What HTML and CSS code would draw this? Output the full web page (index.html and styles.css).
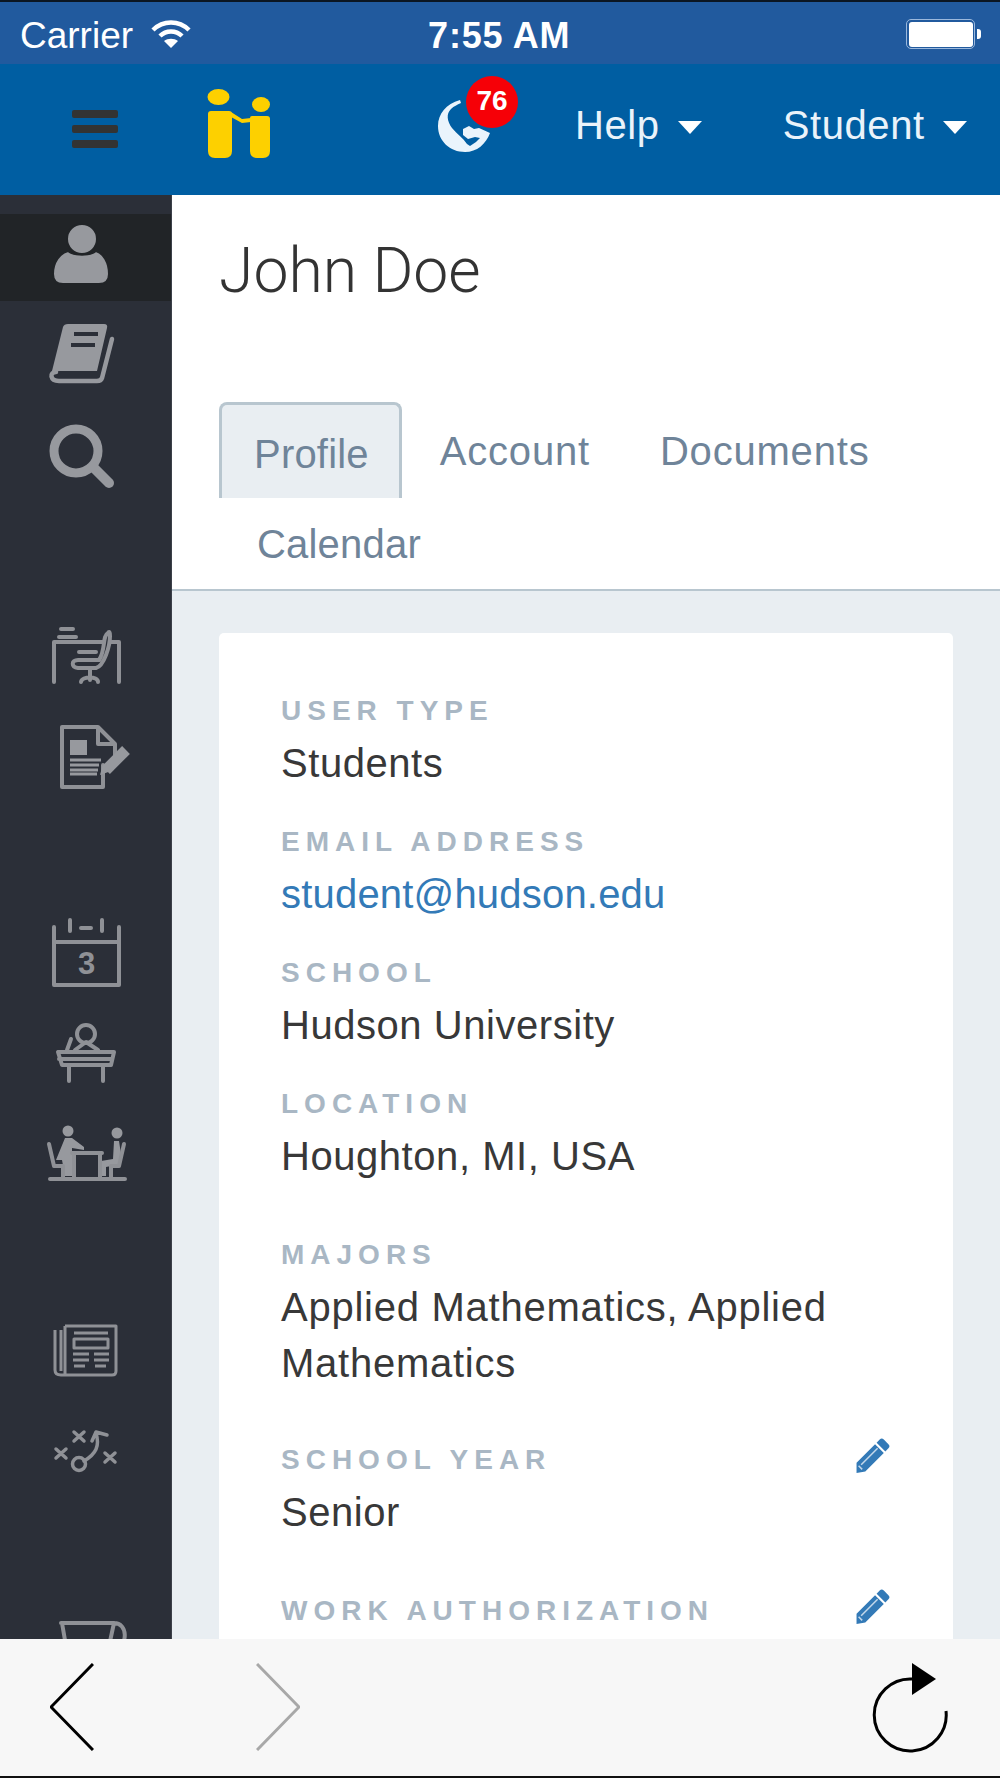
FILE: index.html
```html
<!DOCTYPE html>
<html lang="en">
<head>
<meta charset="utf-8">
<title>John Doe</title>
<link rel="stylesheet" href="styles.css">
</head>
<body>
<div class="phone">
  <div class="status">
    <span class="carrier">Carrier</span>
    <svg class="wifi" viewBox="0 0 40 30" width="40" height="30"><path class="wifi-arc" d="M2 11C12 1 28 1 38 11M9 17C15 11 25 11 31 17"/><path class="wifi-dot" d="M20 29L13 22C17 19 23 19 27 22Z"/></svg>
    <span class="time">7:55 AM</span>
    <span class="battery"><span class="battery-fill"></span></span><span class="battery-nub"></span>
  </div>
  <nav class="nav">
    <span class="burger"><i></i><i></i><i></i></span>
    <svg class="logo" viewBox="0 0 64 70" width="64" height="70"><ellipse cx="11.500" cy="8" rx="11" ry="8"/><ellipse cx="54" cy="15.500" rx="9" ry="7.500"/><path d="M4 22H22Q25 22 25 25V62Q25 69 18 69H8Q1 69 1 62V25Q1 22 4 22Z"/><path d="M45 27H60Q63 27 63 30V62Q63 69 56 69H50Q43 69 43 62V29Q43 27 45 27Z"/><path d="M24 23L35 30L44 29V33L35 34L24 28Z"/></svg>
    <span class="globe-wrap">
      <svg class="globe" viewBox="0 0 54 54" width="54" height="54"><path class="globe-land" d="M23 0C9 4 1 14 1 26C1 41 13 52 28 52C40 52 49 44 53 33L42 28L37 29L32 26L26 29L26 35L31 39L38 37L43 38L39 42L33 46L30 44C26 38 20 34 15 28C10 21 9 14 14 9C17 6 20 5 24 3Z"/></svg>
      <span class="badge">76</span>
    </span>
    <span class="nav-link nav-help">Help<i class="caret"></i></span>
    <span class="nav-link nav-student">Student<i class="caret"></i></span>
  </nav>
  <div class="main">
    <aside class="sidebar">
      <div class="side-group side-group-1">
        <a class="side-item side-active"><svg class="ico" viewBox="0 0 100 80"><path class="fill" d="M17 60C17 48 24 39 32 37C38 42 54 42 60 37C67 39 73 48 73 60Q73 70 63 70H27Q17 70 17 60Z"/><circle class="fill" cx="46" cy="25" r="15"/></svg></a>
        <a class="side-item"><svg class="ico" viewBox="0 0 100 80"><path class="fill" d="M27 15Q28 12 32 12H68Q72 12 71 16L61 59H24Q18 59 15 63Z"/><path class="book-cover" d="M76 27L66 66Q65 69 61 69H23C14 69 13 60 20 60"/><path class="dark" d="M38 22H62M35 33H59"/></svg></a>
        <a class="side-item item-search"><svg class="ico" viewBox="0 0 100 80"><circle class="thick" cx="40" cy="38" r="22"/><path class="handle" d="M57 54L73 70"/></svg></a>
      </div>
      <div class="side-group side-group-2">
        <a class="side-item"><svg class="ico" viewBox="0 0 100 80"><path class="line" d="M18 66V26H83V66M25 13H37M23 21H40"/><path class="halo" d="M72 17C66 20 70 34 63 44H42C35 44 35 51 42 52H60C68 50 74 30 74 20Q74 14 72 17Z"/><path class="line" d="M43 36H60M54 52V64M45 66C46 60 62 60 62 66"/></svg></a>
        <a class="side-item"><svg class="ico" viewBox="0 0 100 80"><path class="line" d="M67 48V70H26V10H62L79 27V40M62 10V27H79"/><rect class="fill" x="34" y="23" width="17" height="15"/><path class="thin" d="M34 43H65M34 48H63M34 53H62M34 57H61"/><path class="pen" d="M70 53L90 33"/><path class="fill" d="M64 58L67 47L75 54Z"/></svg></a>
      </div>
      <div class="side-group side-group-3">
        <a class="side-item"><svg class="ico" viewBox="0 0 100 80"><path class="line" d="M18 15V73H83V15M18 30H83M34 8V19M66 8V19M45 16H55"/><text class="cal-num" x="50.500" y="62">3</text></svg></a>
        <a class="side-item"><svg class="ico" viewBox="0 0 100 80"><circle class="line" cx="50" cy="21" r="9"/><path class="line" d="M39 37L50 29L62 37"/><path class="line" d="M22 39H78L75 52H26ZM23 46H76M33 52V68M67 52V68M31 37L35 26"/></svg></a>
        <a class="side-item"><svg class="ico" viewBox="0 0 100 80"><circle class="fill" cx="32" cy="17" r="5.500"/><circle class="fill" cx="81" cy="19" r="5.500"/><path class="fill" d="M29 24L36 24L48 33V36L36 34V48L36 62H29L26 46H20ZM78 27H83L85 40V50L70 53V62H65V47L77 45Z"/><path class="line" d="M14 65H89M38 41V64M64 41V64M36 39H66M13 30L18 52H27V64M88 30L83 52H75V64"/></svg></a>
      </div>
      <div class="side-group side-group-4">
        <a class="side-item"><svg class="ico" viewBox="0 0 100 80"><path class="line-sm" d="M29 15V64H25C21 64 19 62 19 59V19M25 19V60M29 15H80V60C80 63 78 64 76 64H25"/><rect class="line-sm" x="38" y="28" width="34" height="9"/><path class="line-sm" d="M38 22H72M37 43H53M58 43H73M37 49H53M58 49H73M38 55H49M59 55H70"/></svg></a>
        <a class="side-item"><svg class="ico" viewBox="0 0 100 80"><circle class="line-play" cx="43" cy="52" r="6.500"/><path class="line-play" d="M20 37L30 46M30 37L20 46M38 20L48 29M48 20L38 29M69 41L79 50M79 41L69 50M48 49C60 42 64 34 60 21M56 29L60 20L71 23"/></svg></a>
      </div>
      <div class="side-group">
        <a class="side-item"><svg class="ico" viewBox="0 0 100 80"><path class="line" d="M25 12H78C92 12 92 34 80 38M26 12L34 58H68L78 12"/></svg></a>
      </div>
    </aside>
    <section class="content">
      <header class="head">
        <h1 class="title">John Doe</h1>
        <ul class="tabs">
          <li class="tab tab-active">Profile</li>
          <li class="tab">Account</li>
          <li class="tab">Documents</li>
          <li class="tab tab-second-row">Calendar</li>
        </ul>
      </header>
      <div class="body">
        <div class="card">
          <div class="field"><div class="label-row"><span class="label">USER TYPE</span></div><div class="value">Students</div></div>
          <div class="field"><div class="label-row"><span class="label">EMAIL ADDRESS</span></div><div class="value value-link">student@hudson.edu</div></div>
          <div class="field"><div class="label-row"><span class="label">SCHOOL</span></div><div class="value">Hudson University</div></div>
          <div class="field field-gap"><div class="label-row"><span class="label">LOCATION</span></div><div class="value">Houghton, MI, USA</div></div>
          <div class="field field-majors"><div class="label-row"><span class="label">MAJORS</span></div><div class="value value-wide">Applied Mathematics, Applied Mathematics</div></div>
          <div class="field field-gap"><div class="label-row"><span class="label">SCHOOL YEAR</span><svg class="pencil" viewBox="0 0 35 35" width="36" height="36"><path d="M24 2.500Q26 0.500 28 2.500L32.500 7Q34.500 9 32.500 11L29.500 14L21 5.500ZM19.500 7L28 15.500L10 33.500L1.500 35V25Z"/><path class="pencil-cut" d="M6 27L22 11M3.500 28L7 31.500"/></svg></div><div class="value">Senior</div></div>
          <div class="field"><div class="label-row"><span class="label">WORK AUTHORIZATION</span><svg class="pencil" viewBox="0 0 35 35" width="36" height="36"><path d="M24 2.500Q26 0.500 28 2.500L32.500 7Q34.500 9 32.500 11L29.500 14L21 5.500ZM19.500 7L28 15.500L10 33.500L1.500 35V25Z"/><path class="pencil-cut" d="M6 27L22 11M3.500 28L7 31.500"/></svg></div></div>
        </div>
      </div>
    </section>
  </div>
  <footer class="toolbar">
    <svg class="chev chev-back" viewBox="0 0 44 88" width="44" height="88"><path d="M43 1L1 44L43 87"/></svg>
    <svg class="chev chev-fwd" viewBox="0 0 44 88" width="44" height="88"><path d="M1 1L43 44L1 87"/></svg>
    <svg class="reload" viewBox="0 0 76 90" width="76" height="90"><path class="reload-arc" d="M74 48A36 36 0 1 1 40 16"/><path class="reload-head" d="M40 0L64 16L40 32Z"/></svg>
  </footer>
</div>
</body>
</html>
```

FILE: styles.css
```css
* { box-sizing: border-box; }
html, body { margin: 0; padding: 0; }
body { font-family: "Liberation Sans", Arial, sans-serif; background: #000; }
.phone { width: 1000px; height: 1778px; display: flex; flex-direction: column; overflow: hidden; border-top: 2px solid #0b1622; border-bottom: 2px solid #111; }

.status { height: 62px; flex: none; background: #215a9e; color: #fff; display: flex; align-items: center; padding: 6px 0 0 20px; }
.carrier { font-size: 37px; }
.wifi { margin-left: 18px; margin-top: -4px; }
.wifi-arc { fill: none; stroke: #fff; stroke-width: 4.500px; }
.wifi-dot { fill: #fff; }
.time { font-size: 36px; font-weight: 700; letter-spacing: .8px; margin-left: 237px; }
.battery { margin-left: 336px; width: 69px; height: 30px; border: 1.500px solid #9bb8dc; border-radius: 5px; padding: 1.500px; display: block; margin-top: -4px; }
.battery-fill { display: block; height: 100%; background: #fff; border-radius: 3px; }
.battery-nub { width: 4px; height: 10px; background: #fff; border-radius: 0 3px 3px 0; margin-left: 2px; margin-top: -4px; }

.nav { height: 131px; flex: none; background: #005ea2; display: flex; align-items: center; color: #eaf3fa; }
.burger { display: flex; flex-direction: column; gap: 7px; width: 46px; margin-left: 72px; margin-top: -2px; }
.burger i { display: block; height: 8px; background: #333; border-radius: 2px; }
.logo { fill: #fdd000; margin-left: 89px; margin-top: -11px; filter: blur(.6px); }
.globe-wrap { position: relative; display: block; margin-left: 166px; width: 54px; height: 54px; margin-top: -5px; }
.globe { display: block; }
.globe-land { fill: #eaf4fc; }
.badge { position: absolute; left: 29px; top: -24px; width: 52px; height: 52px; border-radius: 50%; background: #f60007; color: #fff; font-weight: 700; font-size: 28px; line-height: 50px; text-align: center; }
.nav-link { font-size: 40px; letter-spacing: .6px; display: flex; align-items: center; margin-top: -9px; }
.nav-help { margin-left: 84px; }
.nav-student { margin-left: 81px; }
.caret { display: block; width: 0; height: 0; border-left: 12px solid transparent; border-right: 12px solid transparent; border-top: 13px solid #fff; margin-left: 18px; margin-top: 5px; }

.main { flex: 1; display: flex; min-height: 0; overflow: hidden; }
.sidebar { width: 172px; flex: none; background: #2b2f38; padding-top: 19px; border-right: 1px solid #3c4049; }
.side-group { margin-bottom: 98px; }
.side-group-1 { margin-bottom: 102px; }
.side-group-2 { margin-bottom: 94px; }
.side-group-3 { margin-bottom: 96px; }
.side-item { display: flex; justify-content: center; align-items: center; height: 101px; }
.side-active { height: 87px; background: #212427; padding-bottom: 8px; }
.ico { width: 100px; height: 80px; display: block; flex: none; }
.fill { fill: #97999e; }
.side-active .fill { stroke: #212427; stroke-width: 2px; }
.line { fill: none; stroke: #8f9196; stroke-width: 4px; stroke-linecap: round; stroke-linejoin: round; }
.line-sm { fill: none; stroke: #8f9196; stroke-width: 3px; stroke-linejoin: round; }
.line-play { fill: none; stroke: #8f9196; stroke-width: 3.500px; stroke-linecap: round; stroke-linejoin: round; }
.book-cover { fill: none; stroke: #97999e; stroke-width: 4.500px; stroke-linecap: round; }
.thin { fill: none; stroke: #97999e; stroke-width: 3px; }
.thick { fill: none; stroke: #97999e; stroke-width: 9px; }
.handle { fill: none; stroke: #97999e; stroke-width: 10px; stroke-linecap: round; }
.dark { fill: none; stroke: #2b2f38; stroke-width: 4px; }
.halo { fill: #2b2f38; stroke: #8f9196; stroke-width: 4px; stroke-linejoin: round; }
.pen { fill: none; stroke: #97999e; stroke-width: 11px; }
.cal-num { fill: #8f9196; font-size: 31px; font-weight: 700; text-anchor: middle; font-family: "Liberation Sans", Arial, sans-serif; }

.content { flex: 1; min-width: 0; display: flex; flex-direction: column; background: #e9eef2; }
.head { background: #fff; border-bottom: 2px solid #b8c6cf; padding: 40px 0 0 47px; height: 396px; flex: none; }
.title { margin: 0 0 95px; font-family: Roboto, "Liberation Sans", sans-serif; font-size: 62.500px; line-height: 72px; font-weight: 300; color: #333; }
.tabs { list-style: none; margin: 0; padding: 0; display: flex; flex-wrap: wrap; align-items: flex-start; font-size: 40px; letter-spacing: .8px; color: #6f8499; }
.tab { height: 94px; line-height: 99px; padding: 0 35px; }
.tab-active { height: 96px; line-height: 98px; padding: 0 30px 0 32px; letter-spacing: .2px; background: #e9eef2; border: 3px solid #b8c6cf; border-bottom: 0; border-radius: 8px 8px 0 0; margin-right: 3px; }
.tab-second-row { margin: -3px 0 0 3px; letter-spacing: .2px; }

.body { padding: 42px 47px 0; flex: 1; min-height: 0; }
.card { background: #fff; border-radius: 5px; padding: 52px 62px 40px; }
.field { margin-bottom: 25px; }
.field-gap { margin-bottom: 45px; }
.field-majors { margin-bottom: 43px; }
.label-row { height: 50px; display: flex; justify-content: space-between; align-items: center; }
.label { font-size: 28px; font-weight: 700; letter-spacing: 6px; color: #a9b7c4; padding-top: 2px; }
.value { font-size: 40px; letter-spacing: .55px; line-height: 56px; color: #383838; }
.value-wide { letter-spacing: .75px; }
.value-link { color: #337ab7; letter-spacing: .2px; }
.pencil { fill: #337ab7; margin-bottom: 8px; }
.pencil-cut { fill: none; stroke: #fff; stroke-width: 1.500px; opacity: .7; }

.toolbar { height: 137px; flex: none; background: #f7f7f7; display: flex; align-items: flex-start; padding-top: 24px; }
.chev path { fill: none; stroke-width: 3px; }
.chev-back { stroke: #000; margin-left: 50px; }
.chev-fwd { stroke: #a8a8a8; margin-left: 162px; }
.reload { margin-left: 572px; }
.reload-arc { fill: none; stroke: #000; stroke-width: 3px; }
.reload-head { fill: #000; }
```
